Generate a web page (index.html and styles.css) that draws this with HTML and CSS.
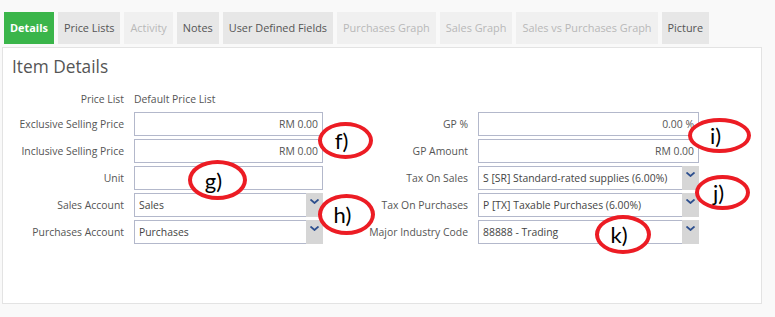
FILE: index.html
```html
<!DOCTYPE html>
<html lang="en">
<head>
  <meta charset="UTF-8">
  <meta name="viewport" content="width=device-width, initial-scale=1.0">
  <title>Item Details</title>
  <link rel="stylesheet" href="styles.css">
</head>
<body>
  <div class="tabs">
    <span class="tab tab-active">Details</span>
    <span class="tab">Price Lists</span>
    <span class="tab tab-disabled">Activity</span>
    <span class="tab">Notes</span>
    <span class="tab">User Defined Fields</span>
    <span class="tab tab-disabled">Purchases Graph</span>
    <span class="tab tab-disabled">Sales Graph</span>
    <span class="tab tab-disabled">Sales vs Purchases Graph</span>
    <span class="tab">Picture</span>
  </div>

  <div class="panel">
    <h2 class="panel-title">Item Details</h2>

    <div class="form">
      <span class="lbl">Price List</span>
      <span class="static">Default Price List</span>
      <span></span>
      <span></span>

      <span class="lbl">Exclusive Selling Price</span>
      <div class="field num">RM 0.00</div>
      <span class="lbl">GP %</span>
      <div class="field num">0.00 %</div>

      <span class="lbl">Inclusive Selling Price</span>
      <div class="field num">RM 0.00</div>
      <span class="lbl">GP Amount</span>
      <div class="field num">RM 0.00</div>

      <span class="lbl">Unit</span>
      <div class="field"></div>
      <span class="lbl">Tax On Sales</span>
      <div class="select">
        <span class="select-value">S [SR] Standard-rated supplies (6.00%)</span>
        <span class="select-btn"><svg width="9" height="5" viewBox="0 0 9 5"><polyline points="0.5,0.5 4.5,4 8.5,0.5" fill="none" stroke="#2d4f8e" stroke-width="1.8"/></svg></span>
      </div>

      <span class="lbl">Sales Account</span>
      <div class="select">
        <span class="select-value">Sales</span>
        <span class="select-btn"><svg width="9" height="5" viewBox="0 0 9 5"><polyline points="0.5,0.5 4.5,4 8.5,0.5" fill="none" stroke="#2d4f8e" stroke-width="1.8"/></svg></span>
      </div>
      <span class="lbl">Tax On Purchases</span>
      <div class="select">
        <span class="select-value">P [TX] Taxable Purchases (6.00%)</span>
        <span class="select-btn"><svg width="9" height="5" viewBox="0 0 9 5"><polyline points="0.5,0.5 4.5,4 8.5,0.5" fill="none" stroke="#2d4f8e" stroke-width="1.8"/></svg></span>
      </div>

      <span class="lbl">Purchases Account</span>
      <div class="select">
        <span class="select-value">Purchases</span>
        <span class="select-btn"><svg width="9" height="5" viewBox="0 0 9 5"><polyline points="0.5,0.5 4.5,4 8.5,0.5" fill="none" stroke="#2d4f8e" stroke-width="1.8"/></svg></span>
      </div>
      <span class="lbl">Major Industry Code</span>
      <div class="select">
        <span class="select-value">88888 - Trading</span>
        <span class="select-btn"><svg width="9" height="5" viewBox="0 0 9 5"><polyline points="0.5,0.5 4.5,4 8.5,0.5" fill="none" stroke="#2d4f8e" stroke-width="1.8"/></svg></span>
      </div>
    </div>
  </div>

  <!-- hand-drawn annotation marks over the form -->
  <span class="mark mark-f">f)</span>
  <span class="mark mark-g">g)</span>
  <span class="mark mark-h">h)</span>
  <span class="mark mark-i">i)</span>
  <span class="mark mark-j">j)</span>
  <span class="mark mark-k">k)</span>
</body>
</html>
```

FILE: styles.css
```css
body {
  font-family: 'Open Sans', sans-serif;
  background-color: #f9f9f9;
  color: #555;
  margin: 0;
  position: relative;
  height: 317px;
  overflow: hidden;
}

.tabs {
  display: flex;
  gap: 4px;
  padding: 12px 0 0 4px;
}

.tab {
  height: 32px;
  line-height: 32px;
  padding: 0 6px;
  font-size: 10.9px;
  background-color: #e7e7e7;
  color: #555;
  white-space: nowrap;
}

.tab-active {
  background-color: #3ab54a;
  color: #fff;
  font-weight: bold;
}

.tab-disabled {
  background-color: #f0f0f0;
  color: #b8b8b8;
}

.panel {
  margin: 3px 0 0 2px;
  width: 758px;
  height: 255px;
  background: #fff;
  border: 1px solid #e3e3e3;
}

.panel-title {
  margin: 7px 0 10px 9px;
  font-size: 17.3px;
  font-weight: normal;
  line-height: 24px;
  color: #555;
}

.form {
  display: grid;
  grid-template-columns: 112px 189px 135px 221px;
  grid-template-rows: 20px repeat(5, 24px);
  column-gap: 10px;
  row-gap: 3px;
  margin-left: 9px;
  font-size: 10.4px;
}

.lbl {
  align-self: center;
  text-align: right;
  white-space: nowrap;
  color: #555;
}

.static {
  align-self: center;
  color: #555;
}

.field {
  box-sizing: border-box;
  height: 24px;
  line-height: 22px;
  padding: 0 4px;
  border: 1px solid #b3b8cb;
  color: #555;
}

.num {
  text-align: right;
}

.select {
  display: flex;
  height: 24px;
}

.select-value {
  flex: 1;
  box-sizing: border-box;
  border: 1px solid #b3b8cb;
  border-right: none;
  line-height: 22px;
  padding: 0 4px;
  color: #444;
  white-space: nowrap;
  overflow: hidden;
}

.select-btn {
  width: 17px;
  background-color: #d6d6d6;
  display: flex;
  justify-content: center;
  align-items: flex-start;
  padding-top: 6px;
  box-sizing: border-box;
}

.mark {
  position: absolute;
  box-sizing: border-box;
  border: 4px solid #ec1c24;
  border-radius: 50%;
  background: #fff;
  display: flex;
  align-items: center;
  justify-content: center;
  font-family: 'Lato', sans-serif;
  font-size: 22px;
  color: #000;
  padding-right: 8px;
}

.mark-f { left: 318px; top: 122px; width: 55px; height: 37px; }
.mark-g { left: 188px; top: 160px; width: 59px; height: 40px; }
.mark-h { left: 318px; top: 194px; width: 57px; height: 41px; }
.mark-i { left: 688px; top: 118px; width: 63px; height: 35px; }
.mark-j { left: 695px; top: 175px; width: 55px; height: 35px; }
.mark-k { left: 595px; top: 215px; width: 56px; height: 39px; }
```
